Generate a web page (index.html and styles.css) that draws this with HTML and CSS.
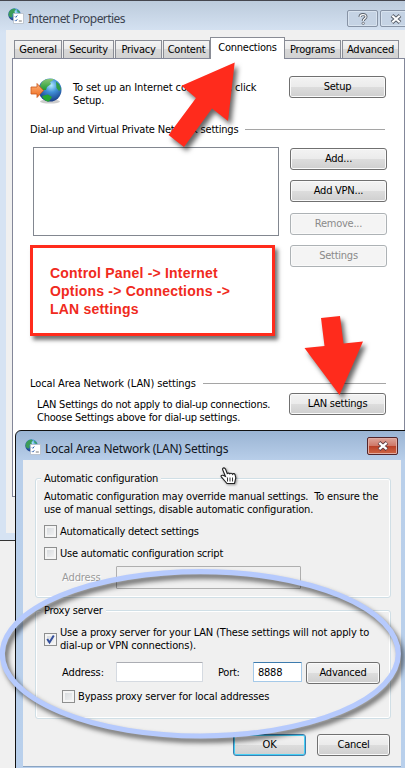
FILE: index.html
```html
<!DOCTYPE html>
<html lang="en">
<head>
<meta charset="utf-8">
<title>Internet Properties</title>
<link rel="stylesheet" href="styles.css">
</head>
<body>
<svg class="defs" width="0" height="0">
  <defs>
    <radialGradient id="sea" cx=".55" cy=".3" r=".75"><stop offset="0" stop-color="#b4ecff"/><stop offset=".4" stop-color="#3f8fd6"/><stop offset="1" stop-color="#14317c"/></radialGradient>
    <linearGradient id="land" x1="0" y1="0" x2="0" y2="1"><stop offset="0" stop-color="#8cc878"/><stop offset="1" stop-color="#1f9a35"/></linearGradient>
    <linearGradient id="orange" x1="0" y1="0" x2="0" y2="1"><stop offset="0" stop-color="#ffb27a"/><stop offset="1" stop-color="#ee6b1c"/></linearGradient>
    <symbol id="props" viewBox="0 0 16 16">
      <circle cx="6.5" cy="6.5" r="6.2" fill="url(#sea)"/>
      <path d="M.8 4.5C2 1.5 4.500.4 6.500.4L8 1.500 6.500 3 6.800 5 4.500 6 4.500 9 3 9.500.6 8z" fill="#3c9c58"/>
      <path d="M9 1.300 12 4 12 5 9.500 4z" fill="#3ba35a"/>
      <path d="M5.500 5.500h10v10h-10z" fill="#fff" stroke="#b5bcc6" stroke-width=".8"/>
      <path d="M7 8.500l.8.800 1.500-1.800M7 12.300l.8.800 1.500-1.800" fill="none" stroke="#2c5fae" stroke-width="1"/>
      <path d="M10.800 13h3" stroke="#777" stroke-width="1"/>
    </symbol>
  </defs>
</svg>
<main class="screen">
  <section class="window">
    <header class="titlebar">
      <svg class="title-icon" width="16" height="16"><use href="#props"/></svg>
      <h1 class="title">Internet Properties</h1>
      <div class="caption-btn help">
        <svg width="10" height="12" viewBox="0 0 10 12"><path d="M2 4C2 .8 8 .8 8 3.700 8 5.600 5.200 5.500 5.200 8" fill="none" stroke="#59606b" stroke-width="3"/><path d="M2 4C2 .8 8 .8 8 3.700 8 5.600 5.200 5.500 5.200 8" fill="none" stroke="#fff" stroke-width="1.200"/><circle cx="5.200" cy="10.300" r="1.200" fill="#fff" stroke="#59606b" stroke-width=".8"/></svg>
      </div>
      <div class="caption-btn close-idle">
        <svg width="12" height="10" viewBox="0 0 12 10"><path d="M2 1.500l8 7M10 1.500l-8 7" stroke="#59606b" stroke-width="4"/><path d="M2.300 1.800l7.400 6.400M9.700 1.800L2.300 8.200" stroke="#fff" stroke-width="2"/></svg>
      </div>
    </header>
    <div class="client">
      <nav class="tabs">
        <span class="tab general">General</span>
        <span class="tab security">Security</span>
        <span class="tab privacy">Privacy</span>
        <span class="tab content">Content</span>
        <span class="tab active">Connections</span>
        <span class="tab programs">Programs</span>
        <span class="tab advanced">Advanced</span>
      </nav>
      <div class="page">
        <div class="setup-row">
          <svg class="globe" width="33" height="26" viewBox="0 0 33 26">
            <ellipse cx="20" cy="23.500" rx="10" ry="2" fill="#999" opacity=".5"/>
            <circle cx="20" cy="12" r="11.500" fill="url(#sea)"/>
            <path d="M12 4C15 1 20 0 24 1.200L22 3 20 4 21 6 17 9 16 12 12 12 10 8z" fill="url(#land)"/>
            <path d="M12 18l6-1.500 4 2.500-3 4.500c-3 0-6-2-7-5.500z" fill="#25a632"/>
            <path d="M26 3.500l3 2.500 2 5-2 2-2.500-3z" fill="#2f9e48"/>
            <path d="M1 9h6V5.500l6.500 7-6.500 7V16H1z" fill="url(#orange)" stroke="#c9571a" stroke-width=".8"/>
          </svg>
          <p class="setup-text">To set up an Internet connection, click<br>Setup.</p>
          <button class="btn">Setup</button>
        </div>
        <h2 class="rule dialup"><span>Dial-up and Virtual Private Network settings</span></h2>
        <div class="connections">
          <div class="listbox"></div>
          <div class="stack">
            <button class="btn">Add...</button>
            <button class="btn">Add VPN...</button>
            <button class="btn off">Remove...</button>
            <button class="btn off">Settings</button>
          </div>
        </div>
        <h2 class="rule lan"><span>Local Area Network (LAN) settings</span></h2>
        <div class="lan-row">
          <p class="lan-text">LAN Settings do not apply to dial-up connections.<br>Choose Settings above for dial-up settings.</p>
          <button class="btn">LAN settings</button>
        </div>
      </div>
    </div>
  </section>

  <aside class="callout">Control Panel -&gt; Internet Options -&gt; Connections -&gt; LAN settings</aside>

  <section class="dialog">
    <header class="dialog-bar">
      <svg class="title-icon" width="16" height="16"><use href="#props"/></svg>
      <h1 class="title">Local Area Network (LAN) Settings</h1>
      <div class="close">
        <svg width="12" height="10" viewBox="0 0 12 10"><path d="M2 1.500l8 7M10 1.500l-8 7" stroke="#5b3a40" stroke-width="4"/><path d="M2.300 1.800l7.400 6.400M9.700 1.800L2.300 8.200" stroke="#fff" stroke-width="2.300"/></svg>
      </div>
    </header>
    <div class="dialog-body">
      <div class="group auto">
        <h2 class="legend">Automatic configuration</h2>
        <p class="note">Automatic configuration may override manual settings.&nbsp; To ensure the<br>use of manual settings, disable automatic configuration.</p>
        <div class="check detect"><i class="box"></i><span>Automatically detect settings</span></div>
        <div class="check script"><i class="box"></i><span>Use automatic configuration script</span></div>
        <div class="field-row off-row"><span class="addr-label">Address</span><div class="field wide"></div></div>
      </div>
      <div class="group proxy">
        <h2 class="legend">Proxy server</h2>
        <div class="check use"><i class="box"><svg width="11" height="11" viewBox="0 0 11 11"><path d="M2.200 5l2.300 3.500L8.800 1.500" fill="none" stroke="#344f9c" stroke-width="2"/></svg></i><span class="use-text">Use a proxy server for your LAN (These settings will not apply to<br>dial-up or VPN connections).</span></div>
        <div class="field-row"><span class="addr-label">Address:</span><div class="field addr"></div><span class="port-label">Port:</span><div class="field port">8888</div><button class="btn adv">Advanced</button></div>
        <div class="check bypass"><i class="box"></i><span>Bypass proxy server for local addresses</span></div>
      </div>
      <footer class="actions"><button class="btn ok">OK</button><button class="btn cancel">Cancel</button></footer>
    </div>
  </section>

  <svg class="annotations" width="405" height="768" viewBox="0 0 405 768">
    <g fill="#ff2b1c">
      <path d="M234.700 62.500L181.500 85.700 196 98 168.500 135 184 147 212 108.500 228 121z"/>
      <path d="M321 318L340 316 343.500 343.500 363 341.500 339.500 395 304.500 348 324.500 346z"/>
    </g>
    <ellipse cx="200.300" cy="653.800" rx="198" ry="82.200" fill="none" stroke="#b6cafd" stroke-width="5.200"/>
  </svg>
  <svg class="cursor" width="18" height="19" viewBox="0 0 18 19"><path d="M4.500 1C3 .5 2.200 1.800 2.800 3L5.500 9.500 3 8.300C1 7.800.5 9.500 1.800 10.500L7 16.500H14.500L15.800 11 15 7.500C14.500 6.300 12.800 6.500 12.500 7.200 12 6 10.200 6 9.800 6.800 9.200 5.800 7.700 6 7.200 6.500L5.500 2z" fill="#fff" stroke="#222" stroke-width="1.100"/><path d="M7.500 10.500v4M10 10.500v4M12.500 10.500v4" stroke="#222" stroke-width=".9"/></svg>
</main>
</body>
</html>
```

FILE: styles.css
```css
* { box-sizing: border-box; }
body { margin: 0; background: #f0f0f0; }
h1, h2, p { margin: 0; font-weight: normal; }
.defs { position: absolute; }
.screen {
  position: relative; width: 405px; height: 768px; overflow: hidden;
  font: 11px/13px "DejaVu Sans Condensed", "DejaVu Sans", sans-serif;
  font-stretch: condensed; letter-spacing: -0.24px; color: #000; white-space: nowrap;
}
.window {
  height: 541px; border-top: 1px solid #45464e; border-bottom: 1px solid #333;
  background: linear-gradient(#bccbdc, #d6e3f3 32px); padding: 0 0 7px 6px;
}
.titlebar { height: 29px; display: flex; align-items: center; padding: 4px 0 0 2px; }
.title-icon { margin-top: -4px; flex: none; }
.title { font: 12px/16px "Noto Sans", "Open Sans", sans-serif; letter-spacing: -0.55px; color: #3d4451; margin: 2px 0 0 4px; }
.caption-btn {
  width: 31px; height: 17px; border: 1px solid #8793a5; border-radius: 2px; flex: none;
  display: flex; align-items: center; justify-content: center; background: #c5d3e4; box-shadow: inset 0 0 0 1px #d8e3ef;
}
.help { margin: 2px 2px 0 auto; }
.close-idle { margin: 2px -6px 0 0; }
.client { background: #f0f0f0; height: 503px; padding: 7px 0 0 6px; }
.tabs { height: 21px; display: flex; align-items: flex-end; padding-left: 2px; }
.tab {
  height: 18px; border: 1px solid #898c95; border-bottom: 0; line-height: 18px; text-align: center;
  background: linear-gradient(#f4f4f4, #e9e9e9 50%, #d8d8d8 50%, #d2d2d2); flex: none; margin-right: 1px;
}
.general { width: 48px; }
.security { width: 51px; }
.privacy { width: 47px; }
.content { width: 47px; margin-right: 0; }
.active { width: 75px; height: 22px; line-height: 20px; background: #fff; margin-bottom: -1px; position: relative; margin-right: 0; }
.programs { width: 56px; border-left: 0; }
.advanced { width: 57px; }
.page { height: 439px; background: #fff; border: 1px solid #838799; padding: 17px 18px 0 17px; }
.setup-row { display: flex; align-items: flex-start; height: 47px; }
.globe { margin: 2px 0 0 0; }
.setup-text { margin: 5px 0 0 10px; letter-spacing: -.12px; }
.btn {
  font: inherit; letter-spacing: inherit; color: #000; width: 97px; height: 22px; padding: 0 0 1px; border: 1px solid #707070; border-radius: 3px;
  background: linear-gradient(#f3f3f3, #ebebeb 50%, #dddddd 50%, #cfcfcf); box-shadow: inset 0 0 0 1px #fafafa; flex: none;
}
.off { color: #8a8a8a; background: #f4f4f4; border-color: #adb2b5; }
.setup-row .btn, .lan-row .btn { margin-left: auto; }
.rule { font-size: inherit; display: flex; align-items: center; height: 13px; }
.rule::after { content: ""; flex: 1; height: 1px; background: #a5a5a5; margin-left: 7px; }
.dialup { letter-spacing: -.2px; margin-right: 1px; }
.connections { display: flex; justify-content: space-between; height: 120px; margin: 11px -1px 0 3px; }
.listbox { width: 246px; height: 89px; border: 1px solid #828790; }
.stack { display: grid; grid-template-rows: 32px 33px 32px 22px; padding-top: 1px; }
.lan { margin-top: 110px; letter-spacing: -.11px; }
.lan-row { display: flex; margin-top: 3px; }
.lan-text { margin: 5px 0 0 7px; }

.callout {
  position: absolute; left: 30px; top: 245px; width: 245px; height: 91px; border: 3px solid #ff2b1c; background: #fff;
  box-shadow: 3px 4px 4px rgba(0,0,0,.55); color: #f02a20; padding: 16px 20px 0 17px; white-space: normal;
  font: bold 14px/18px "Liberation Sans", Arial, sans-serif; letter-spacing: .2px;
}

.dialog {
  position: absolute; left: 15px; top: 430px; width: 400px; height: 345px; border: 1px solid #111; border-radius: 6px 0 0 0;
  background: linear-gradient(#9ab4d3, #b9cfea 30px, #b9d0ec); padding-left: 7px;
}
.dialog-bar { height: 29px; width: 378px; display: flex; align-items: center; padding: 7px 0 0 2px; }
.dialog-bar .title { color: #111622; letter-spacing: -.26px; margin-top: 0; }
.close {
  margin: -6px 3px 0 auto; width: 31px; height: 18px; border: 1px solid #53252a; border-radius: 2px; display: flex; align-items: center; justify-content: center;
  background: linear-gradient(#dda69b, #cf7868 48%, #b93f27 50%, #cf6745); box-shadow: inset 0 0 0 1px #e2ada3;
}
.dialog-body { width: 378px; height: 307px; background: #f0f0f0; padding: 18px 10px 0 12px; border-bottom: 1px solid #8aa4c2; }
.group { border: 1px solid #d0dfe6; border-radius: 3px; box-shadow: inset 0 0 0 1px #fff; width: 356px; padding: 0 0 0 8px; }
.legend { font-size: inherit; width: max-content; background: #f0f0f0; margin: -7px 0 0 -3px; padding: 0 3px; height: 13px; }
.auto { height: 120px; }
.note { margin-top: 5px; letter-spacing: -.19px; }
.check { display: flex; align-items: center; height: 14px; }
.box { width: 13px; height: 13px; border: 1px solid #8e8f8f; background: linear-gradient(135deg, #d2d6da, #f6f6f6); box-shadow: inset 0 0 0 2px #f4f4f4; margin-right: 3px; flex: none; }
.box svg { display: block; }
.detect { margin-top: 8px; }
.script { margin-top: 8px; }
.field-row { display: flex; align-items: center; height: 22px; padding-left: 18px; }
.addr-label { width: 54px; flex: none; letter-spacing: -.1px; }
.off-row { color: #9a9a9a; margin-top: 6px; text-shadow: 1px 1px #fff; }
.field { border: 1px solid #d5dae1; border-top-color: #abadb3; background: #fff; flex: none; height: 20px; border-radius: 1px; }
.wide { width: 185px; height: 23px; background: #f0f0f0; border-color: #afafaf; }
.proxy { margin-top: 12px; height: 109px; }
.use { margin-top: 9px; height: 26px; letter-spacing: -.16px; }
.field-row + .bypass { margin: 6px 0 0 18px; letter-spacing: -.14px; }
.proxy .field-row { margin-top: 9px; }
.addr { width: 87px; }
.port-label { width: 35px; margin-left: 15px; }
.port { width: 49px; border-color: #a5c9e8; border-top-color: #3d7bad; padding: 3px 0 0 4px; }
.adv { width: 74px; margin: 2px 0 0 4px; }
.actions { display: flex; justify-content: flex-end; gap: 11px; margin: 15px 1px 0 0; }
.actions .btn { width: 73px; }
.actions .ok { border-color: #3c7fb1; box-shadow: inset 0 0 0 1px #46d0f5; }

.annotations { position: absolute; left: 0; top: 0; filter: drop-shadow(3px 4px 2.500px rgba(0,0,0,.6)); }
.cursor { position: absolute; left: 220px; top: 467px; filter: drop-shadow(1px 1px 1px rgba(0,0,0,.4)); }
```
